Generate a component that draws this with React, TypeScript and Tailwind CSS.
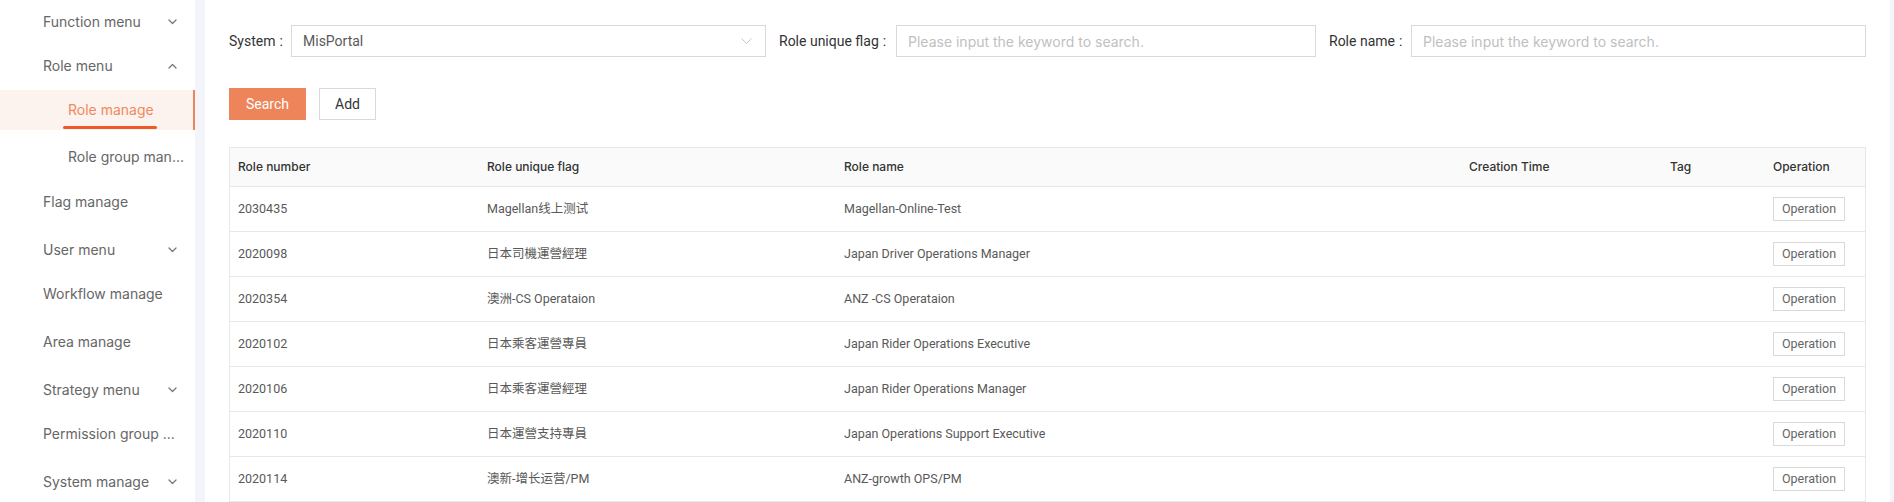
import React from "react";

type MenuItem = {
  label: string;
  level: 1 | 2;
  chevron?: "down" | "up";
  active?: boolean;
  mt: string;
};

const menu: MenuItem[] = [
  { label: "Function menu", level: 1, chevron: "down", mt: "mt-[2px]" },
  { label: "Role menu", level: 1, chevron: "up", mt: "mt-[4px]" },
  { label: "Role manage", level: 2, active: true, mt: "mt-[4px]" },
  { label: "Role group man...", level: 2, mt: "mt-[7px]" },
  { label: "Flag manage", level: 1, mt: "mt-[5px]" },
  { label: "User menu", level: 1, chevron: "down", mt: "mt-[8px]" },
  { label: "Workflow manage", level: 1, mt: "mt-[4px]" },
  { label: "Area manage", level: 1, mt: "mt-[8px]" },
  { label: "Strategy menu", level: 1, chevron: "down", mt: "mt-[8px]" },
  { label: "Permission group ...", level: 1, mt: "mt-[4px]" },
  { label: "System manage", level: 1, chevron: "down", mt: "mt-[8px]" },
];

const rows = [
  ["2030435", "Magellan线上测试", "Magellan-Online-Test"],
  ["2020098", "日本司機運營經理", "Japan Driver Operations Manager"],
  ["2020354", "澳洲-CS Operataion", "ANZ -CS Operataion"],
  ["2020102", "日本乘客運營專員", "Japan Rider Operations Executive"],
  ["2020106", "日本乘客運營經理", "Japan Rider Operations Manager"],
  ["2020110", "日本運營支持專員", "Japan Operations Support Executive"],
  ["2020114", "澳新-增长运营/PM", "ANZ-growth OPS/PM"],
];

function Chevron({ dir }: { dir: "down" | "up" }) {
  return (
    <svg width="9" height="6" viewBox="0 0 9 6" className="text-[#777]">
      {dir === "down" ? (
        <polyline points="1,1 4.5,4.5 8,1" fill="none" stroke="currentColor" strokeWidth="1.3" strokeLinecap="round" strokeLinejoin="round" />
      ) : (
        <polyline points="1,5 4.5,1.5 8,5" fill="none" stroke="currentColor" strokeWidth="1.3" strokeLinecap="round" strokeLinejoin="round" />
      )}
    </svg>
  );
}

function Sidebar() {
  return (
    <div className="w-[195px] shrink-0 bg-white flex flex-col font-['Inter','Noto_Sans',sans-serif] text-[14px] text-[#666]">
      {menu.map((m) => (
        <div
          key={m.label}
          className={`${m.mt} h-[40px] shrink-0 flex items-center ${m.level === 1 ? "pl-[43px]" : "pl-[68px]"} pr-[16px] ${
            m.active ? "bg-[#fdf3ee] border-r-[2px] border-[#ee8459] text-[#ef8a5e]" : ""
          }`}
        >
          {m.active ? (
            <span className="relative inline-block leading-[20px]">
              {m.label}
              <span className="absolute -left-[5px] -right-[3px] top-[26px] h-[3px] rounded-full bg-[#f0582a]" />
            </span>
          ) : (
            <span className="flex-1 whitespace-nowrap leading-[20px]">{m.label}</span>
          )}
          {m.chevron && (
            <span className="ml-auto mr-[2px] flex items-center">
              <Chevron dir={m.chevron} />
            </span>
          )}
        </div>
      ))}
    </div>
  );
}

function Label({ text, w }: { text: string; w: string }) {
  return (
    <div className={`${w} shrink-0 flex items-center text-[14px] text-[#333]`}>
      <span>{text}</span>
      <span className="ml-[4px]">:</span>
    </div>
  );
}

function Filters() {
  return (
    <div className="grid grid-cols-3 gap-x-[13px]">
      <div className="flex h-[32px]">
        <Label text="System" w="w-[62px]" />
        <div className="flex-1 border border-[#d9d9d9] flex items-center pl-[11px] pr-[13px] text-[14px] text-[#595959]">
          <span className="flex-1">MisPortal</span>
          <svg width="11" height="6" viewBox="0 0 11 6">
            <polyline points="0.5,0.5 5.5,5.5 10.5,0.5" fill="none" stroke="#c4c4c4" strokeWidth="1" />
          </svg>
        </div>
      </div>
      <div className="flex h-[32px]">
        <Label text="Role unique flag" w="w-[117px]" />
        <div className="flex-1 border border-[#d9d9d9] flex items-center px-[11px] text-[14px] text-[#bfbfbf] font-['Inter','Roboto',sans-serif]">
          Please input the keyword to search.
        </div>
      </div>
      <div className="flex h-[32px]">
        <Label text="Role name" w="w-[82px]" />
        <div className="flex-1 border border-[#d9d9d9] flex items-center px-[11px] text-[14px] text-[#bfbfbf] font-['Inter','Roboto',sans-serif]">
          Please input the keyword to search.
        </div>
      </div>
    </div>
  );
}

const gridCols = "grid grid-cols-[249px_357px_625px_199px_105px_1fr]";

function Table() {
  return (
    <div className="border border-[#e8e8e8] border-b-0">
      <div className={`${gridCols} h-[39px] bg-[#fafafa] border-b border-[#e8e8e8] items-center text-[12px] font-medium text-[#333] font-['Inter','Roboto',sans-serif]`}>
        <div className="pl-[8px]">Role number</div>
        <div className="pl-[8px]">Role unique flag</div>
        <div className="pl-[8px]">Role name</div>
        <div className="pl-[8px]">Creation Time</div>
        <div className="pl-[10px]">Tag</div>
        <div className="pl-[8px]">Operation</div>
      </div>
      {rows.map((r) => (
        <div key={r[0]} className={`${gridCols} h-[45px] border-b border-[#e8e8e8] items-center text-[12.5px] text-[#595959]`}>
          <div className="pl-[8px]">{r[0]}</div>
          <div className="pl-[8px]">{r[1]}</div>
          <div className="pl-[8px]">{r[2]}</div>
          <div className="pl-[8px]" />
          <div className="pl-[8px]" />
          <div className="pl-[8px]">
            <div className="w-[72px] h-[24px] border border-[#d9d9d9] flex items-center justify-center text-[12.5px] text-[#666] bg-white">
              Operation
            </div>
          </div>
        </div>
      ))}
    </div>
  );
}

export default function App() {
  return (
    <div className="flex w-full h-[502px] overflow-hidden bg-[#f4f5fa]">
      <Sidebar />
      <div className="ml-[10px] mr-[4px] flex-1 bg-white px-[24px] pt-[25px] font-['Roboto','Noto_Sans_CJK_SC',sans-serif]">
        <Filters />
        <div className="mt-[31px] flex gap-[13px]">
          <div className="w-[77px] h-[32px] bg-[#ee845a] text-white text-[14px] flex items-center justify-center">Search</div>
          <div className="w-[57px] h-[32px] border border-[#d9d9d9] text-[#333] text-[14px] flex items-center justify-center">Add</div>
        </div>
        <div className="mt-[27px]">
          <Table />
        </div>
      </div>
    </div>
  );
}
